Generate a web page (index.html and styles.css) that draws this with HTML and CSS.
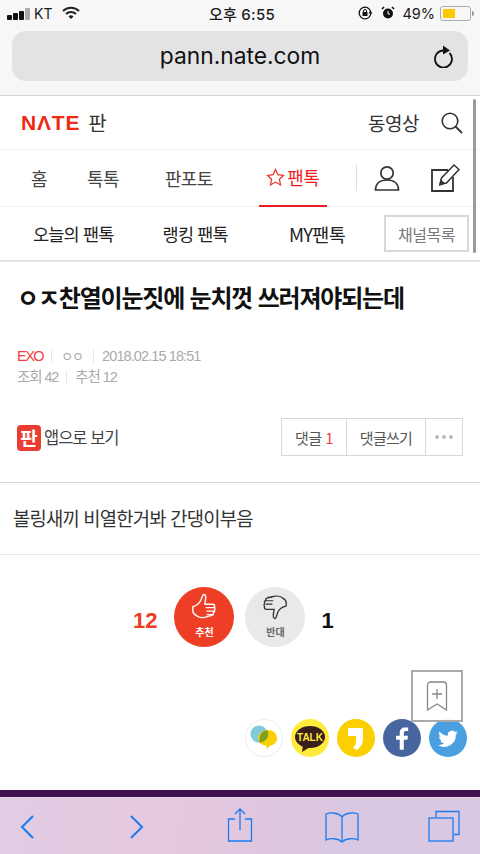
FILE: index.html
```html
<!DOCTYPE html>
<html lang="ko">
<head>
<meta charset="utf-8">
<title>pann.nate.com</title>
<link rel="stylesheet" href="styles.css">
</head>
<body>
<div class="screen">
  <div class="chrome">
    <div class="status">
      <div class="status-side status-left">
        <span class="signal"><i class="b1"></i><i class="b2"></i><i class="b3"></i><i class="b4"></i></span>
        <span class="carrier">KT</span>
        <svg class="wifi" width="18" height="14" viewBox="0 0 18 14"><path d="M1 5a11.500 11.500 0 0 1 16 0" fill="none" stroke="#222" stroke-width="2"/><path d="M4 8a7 7 0 0 1 10 0" fill="none" stroke="#222" stroke-width="2"/><path d="M6.500 10.500a3.500 3.500 0 0 1 5 0L9 13z" fill="#222"/></svg>
      </div>
      <div class="clock">오후 6:55</div>
      <div class="status-side status-right">
        <svg width="16" height="14" viewBox="0 0 16 14"><circle cx="8" cy="7" r="5.800" fill="none" stroke="#111" stroke-width="1.300"/><rect x="5.500" y="6" width="5" height="4" fill="#111"/><path d="M6.500 6V5a1.500 1.500 0 0 1 3 0v1" fill="none" stroke="#111"/><path d="M13 5l2.500 2.500h-4z" fill="#111"/></svg>
        <svg class="alarm" width="14" height="14" viewBox="0 0 14 14"><circle cx="7" cy="7.500" r="5" fill="#111"/><path d="M1 3l2-2M13 3l-2-2" stroke="#111" stroke-width="1.600"/><path d="M7 5v3h2" stroke="#fff" fill="none"/></svg>
        <span class="percent">49%</span>
        <span class="battery"><i class="level"></i></span><i class="nub"></i>
      </div>
    </div>
    <div class="urlbar">
      <span class="url">pann.nate.com</span>
      <svg class="reload" width="22" height="24" viewBox="0 0 22 24"><path d="M16.500 9a8.500 8.500 0 1 1-6-2.500" fill="none" stroke="#111" stroke-width="1.800"/><path d="M10 1.500l7 5-7 4z" fill="#111"/></svg>
    </div>
  </div>

  <main class="page">
    <header class="top">
      <div class="brand"><span class="logo">NΛTE</span><span class="pann">판</span></div>
      <div class="top-right">
        <span class="video">동영상</span>
        <svg width="24" height="24" viewBox="0 0 24 24"><circle cx="10" cy="10" r="7.800" fill="none" stroke="#333" stroke-width="1.600"/><path d="M15.500 15.500l6.500 6.500" stroke="#333" stroke-width="1.800"/></svg>
      </div>
    </header>

    <nav class="gnb">
      <a class="g g-home">홈</a>
      <a class="g g-talk">톡톡</a>
      <a class="g g-photo">판포토</a>
      <a class="g g-fan">
        <svg width="19" height="19" viewBox="0 0 19 19"><path d="M9.500 1.500l2.400 5.200 5.600.7-4.100 3.900 1.100 5.600-5-2.800-5 2.800 1.100-5.600L1.500 7.400l5.600-.7z" fill="none" stroke="#ee2a24" stroke-width="1.200"/></svg>
        <span>팬톡</span>
      </a>
      <span class="g-sep"></span>
      <svg class="g-user" width="26" height="28" viewBox="0 0 26 28"><circle cx="13" cy="9" r="6.200" fill="none" stroke="#333" stroke-width="1.700"/><path d="M1.500 26c0-6.500 4.500-10 11.500-10s11.500 3.500 11.500 10z" fill="none" stroke="#333" stroke-width="1.700"/></svg>
      <svg class="g-edit" width="30" height="30" viewBox="0 0 30 30"><path d="M18 7H2v21h21V14" fill="none" stroke="#333" stroke-width="1.800"/><path d="M10 21l1.500-6L24 2l5 4.500L16.500 20z" fill="none" stroke="#333" stroke-width="1.500"/><path d="M9 23l1.800-6.500 4.600 4.200z" fill="#333"/></svg>
    </nav>

    <nav class="lnb">
      <a class="l l-today">오늘의 팬톡</a>
      <a class="l l-rank">랭킹 팬톡</a>
      <a class="l l-my">MY팬톡</a>
      <a class="chan">채널목록</a>
    </nav>

    <h1 class="title">ㅇㅈ찬열이눈짓에 눈치껏 쓰러져야되는데</h1>

    <div class="meta">
      <div class="meta-row"><span class="exo">EXO</span><i class="vr"></i><span class="nick">ㅇㅇ</span><i class="vr"></i><span>2018.02.15 18:51</span></div>
      <div class="meta-row meta-stat"><span>조회 42</span><i class="vr"></i><span>추천 12</span></div>
    </div>

    <div class="actions">
      <a class="app">
        <span class="app-icon">판</span>
        <span>앱으로 보기</span>
      </a>
      <div class="btns">
        <a class="btn btn-a">댓글 <em>1</em></a>
        <a class="btn btn-b">댓글쓰기</a>
        <a class="btn btn-c"><i></i><i></i><i></i></a>
      </div>
    </div>

    <div class="body-text">볼링새끼 비열한거봐 간댕이부음</div>

    <div class="vote">
      <span class="count up">12</span>
      <div class="circle c-up">
        <svg width="32" height="36" viewBox="0 0 32 36"><path d="M3 16c3-1 7-3 9-7 1-2 2-5 3-7 2-1 3 1 3 3 0 3-1 6-1 8h9c2 0 3 2 2 3 1 1 1 3 0 4 1 1 0 3-1 3 0 2-1 3-2 3l-7 2c-4 1-9 0-11-2-2-1-4-3-4-5z" fill="none" stroke="#fff" stroke-width="1.600"/><path d="M18 17h10M19 21h9M19 25h7" stroke="#fff" stroke-width="1.400"/></svg>
        <span class="c-label">추천</span>
      </div>
      <div class="circle c-down">
        <svg width="32" height="36" viewBox="0 0 32 36"><path d="M29 15c-3 1-7 2-9 6-1 2-2 5-3 8-2 2-3-1-3-3 0-3 1-5 1-7H6c-2 0-3-2-2-3-1-1-1-3 0-4-1-1 0-3 1-3 0-2 1-3 2-3l7-2c4-1 9 0 11 2 2 1 4 3 4 5z" fill="none" stroke="#333" stroke-width="1.500"/><path d="M14 9H5M13 13H5M13 5H7" stroke="#333" stroke-width="1.400"/></svg>
        <span class="c-label">반대</span>
      </div>
      <span class="count down">1</span>
    </div>

    <div class="share">
      <span class="sh sh-band">
        <svg width="38" height="38" viewBox="0 0 38 38"><circle cx="14" cy="15" r="8.500" fill="#7fcbdc"/><path d="M23 11c5 0 9 3.500 9 8s-3 7-7 7.500l-3 3.500-1-3.500c-4 0-8-3-8-7.500s5-8 10-8z" fill="#fcd000"/><path d="M14.500 23.400a8.500 8.500 0 0 0 8-12c-5-.5-9 5-8 12z" fill="#7f9f20"/></svg>
      </span>
      <span class="sh sh-kakao">
        <svg width="38" height="38" viewBox="0 0 38 38"><ellipse cx="19" cy="18" rx="15" ry="11" fill="#3a1d1d"/><path d="M12 26l-1 7 8-5z" fill="#3a1d1d"/><text x="19" y="22" text-anchor="middle" class="talk">TALK</text></svg>
      </span>
      <span class="sh sh-story">
        <svg width="38" height="38" viewBox="0 0 38 38"><path d="M11 9h15v11c0 4-2 8-6 11l-4-2c2-2 3-4 3-7.500V17h-8z" fill="#fff"/></svg>
      </span>
      <span class="sh sh-fb">
        <svg width="38" height="38" viewBox="-2 -3 42 42"><path d="M21 31V20h4l.6-4.500H21v-3c0-1.400.4-2.200 2.300-2.200h2.500V6.500C25.400 6.400 24 6.300 22.400 6.300c-3.400 0-5.900 2.100-5.900 6v3.200h-4V20h4v11z" fill="#fff"/></svg>
      </span>
      <span class="sh sh-tw">
        <svg width="38" height="38" viewBox="-4 -5 46 46"><path d="M31 11.500c-.9.400-1.800.6-2.800.8 1-.6 1.800-1.600 2.200-2.700-1 .6-2 1-3.100 1.200a4.900 4.900 0 0 0-8.400 4.500c-4.100-.2-7.700-2.200-10.100-5.200-1.300 2.200-.7 5.100 1.500 6.600-.8 0-1.600-.2-2.200-.6 0 2.400 1.700 4.400 3.900 4.900-.7.200-1.500.2-2.200.1.600 2 2.400 3.400 4.600 3.400A9.900 9.900 0 0 1 7 26.500 14 14 0 0 0 28.500 14c1-.7 1.800-1.500 2.500-2.500z" fill="#fff"/></svg>
      </span>
    </div>

    <div class="dark-band"></div>
    <div class="scrollbar"></div>
    <div class="bookmark">
      <svg width="22" height="30" viewBox="0 0 22 30"><path d="M1.500 29V4a3 3 0 0 1 3-3h13a3 3 0 0 1 3 3v25L11 23z" fill="none" stroke="#888" stroke-width="1.300"/><path d="M11 8v10M6 13h10" stroke="#888" stroke-width="1.300"/></svg>
    </div>
  </main>

  <footer class="toolbar">
    <svg class="t-back" width="16" height="26" viewBox="0 0 16 26"><path d="M13 2L2 13l11 11" fill="none" stroke="#1a7cf0" stroke-width="2"/></svg>
    <svg class="t-fwd" width="16" height="26" viewBox="0 0 16 26"><path d="M3 2l11 11L3 24" fill="none" stroke="#1a7cf0" stroke-width="2"/></svg>
    <svg class="t-share" width="26" height="36" viewBox="0 0 26 36"><path d="M8 12H1.500v22h23V12H18" fill="none" stroke="#1a7cf0" stroke-width="1.300"/><path d="M13 23V2M8 7l5-5 5 5" fill="none" stroke="#1a7cf0" stroke-width="1.300"/></svg>
    <svg class="t-book" width="34" height="32" viewBox="0 0 34 32"><path d="M17 6C14 2 6 1 1 3v26c5-2 12-2 16 2 4-4 11-4 16-2V3c-5-2-13-1-16 3zM17 6v24" fill="none" stroke="#1a7cf0" stroke-width="1.300"/></svg>
    <svg class="t-tabs" width="32" height="32" viewBox="0 0 32 32"><path d="M8 7V1.500h23v23h-5" fill="none" stroke="#1a7cf0" stroke-width="1.300"/><rect x="1" y="8" width="24" height="23" fill="none" stroke="#1a7cf0" stroke-width="1.300"/></svg>
  </footer>
</div>
</body>
</html>
```
FILE: styles.css
```css
* { box-sizing: border-box; }
html, body { margin: 0; padding: 0; background: #fff; }
body { font-family: "Noto Sans CJK KR", "Liberation Sans", sans-serif; color: #222; }
i, em { font-style: normal; display: block; }
a { color: inherit; text-decoration: none; }
.screen { width: 480px; height: 854px; overflow: hidden; display: flex; flex-direction: column; }

.chrome { height: 96px; background: #f7f7f7; border-bottom: 1px solid #d5d5d5; padding: 0 12px; flex: none; }
.status { height: 31px; display: flex; align-items: center; justify-content: space-between; padding: 0 0 5px; position: relative; font-family: Inter, "Noto Sans CJK KR", sans-serif; font-size: 15px; color: #1c1c1c; }
.status-side { display: flex; align-items: center; }
.status-left { width: 165px; }
.status-right { justify-content: flex-end; padding-right: 3px; width: 170px; margin-right: -9px; }
.signal { display: flex; align-items: flex-end; gap: 1px; height: 13px; margin-left: -5px; }
.signal i { width: 5px; background: #111; border-radius: 1px; }
.signal .b1 { height: 5px; } .signal .b2 { height: 7px; } .signal .b3 { height: 9px; } .signal .b4 { height: 12px; background: #aaa; }
.carrier { margin-left: 4px; font-size: 14px; }
.wifi { margin-left: 10px; }
.clock { font-size: 15px; font-weight: 500; letter-spacing: 0.3px; }
.alarm { margin-left: 8px; }
.percent { margin-left: 7px; font-size: 14.500px; }
.battery { width: 31px; height: 15px; margin-left: 5px; border: 1px solid #aaa; border-radius: 3px; padding: 2px; display: block; }
.battery .level { width: 12px; height: 9px; background: #fdc800; }
.nub { width: 2px; height: 5px; background: #999; margin-left: 1px; border-radius: 0 2px 2px 0; }
.urlbar { height: 50px; background: #e3e3e6; border-radius: 14px; display: flex; align-items: center; justify-content: center; position: relative; }
.url { font-family: Inter, sans-serif; font-size: 22.800px; color: #111; padding-bottom: 2px; }
.reload { position: absolute; right: 13px; top: 13px; }

.page { flex: 1; position: relative; display: flex; flex-direction: column; overflow: hidden; }
.top { height: 54px; flex: none; display: flex; align-items: center; justify-content: space-between; padding: 0 16px 0 21px; border-bottom: 1px solid #f2f2f2; }
.brand { display: flex; align-items: center; }
.logo { font-family: "Liberation Sans", sans-serif; font-weight: 700; font-size: 21px; letter-spacing: 0.8px; color: #ef2a12; }
.pann { margin-left: 8px; font-size: 20px; color: #333; }
.top-right { display: flex; align-items: center; }
.video { font-size: 19px; color: #333; letter-spacing: -0.500px; margin-right: 21px; }

.gnb { height: 57px; flex: none; display: flex; align-items: center; border-bottom: 1px solid #f2f2f2; position: relative; font-size: 18px; letter-spacing: -0.600px; color: #444; }
.g { display: block; }
.g-home { margin-left: 31px; }
.g-talk { margin-left: 40px; }
.g-photo { margin-left: 46px; }
.g-fan { width: 68px; height: 57px; margin-left: 46px; margin-right: 29px; display: flex; align-items: center; justify-content: center; gap: 2px; color: #ee1c25; border-bottom: 2px solid #ee1c25; flex: none; }
.g-sep { width: 1px; height: 26px; background: #ddd; }
.g-user { margin-left: 17px; }
.g-edit { margin-left: 30px; margin-top: 0; }

.lnb { height: 55px; flex: none; display: flex; align-items: center; border-bottom: 2px solid #e4e4e4; font-size: 17.500px; letter-spacing: -0.800px; color: #222; }
.l-today { margin-left: 33px; }
.l-rank { margin-left: 49px; }
.l-my { margin-left: 61px; font-size: 18.500px; letter-spacing: -0.700px; }
.chan { margin-left: 39px; width: 85px; height: 37px; border: 2px solid #d8d8d8; display: flex; align-items: center; justify-content: center; font-size: 16px; letter-spacing: -0.500px; color: #777; }

.title { margin: 18px 0 0 17px; font-size: 24px; line-height: 34px; font-weight: 700; letter-spacing: -1.200px; color: #111; white-space: nowrap; }

.meta { margin: 32px 0 0 17px; font-family: "Liberation Sans", "Noto Sans CJK KR", sans-serif; font-size: 14.500px; letter-spacing: -0.900px; color: #aaa; line-height: 21px; }
.meta-row { display: flex; align-items: center; }
.meta-stat { letter-spacing: -1.100px; }
.exo { color: #ef3e3e; letter-spacing: -1.500px; }
.nick { font-size: 13px; letter-spacing: -1px; margin: 0 2px 0 1px; }
.vr { width: 1px; height: 13px; background: #e5e5e5; margin: 0 8px; }

.actions { margin-top: 30px; height: 38px; display: flex; align-items: center; justify-content: space-between; padding: 0 17px; flex: none; }
.app { display: flex; align-items: center; gap: 3px; font-size: 16.500px; letter-spacing: -1px; color: #444; }
.app-icon { width: 24px; height: 26px; border-radius: 4px; background: #ea3c30; color: #fff; display: flex; align-items: center; justify-content: center; font-size: 19px; font-weight: 700; letter-spacing: 0; margin-top: 1px; }
.btns { display: flex; height: 38px; border: 1px solid #d8d8d8; font-size: 15px; letter-spacing: -0.700px; color: #555; }
.btn { display: flex; align-items: center; justify-content: center; gap: 4px; border-right: 1px solid #d8d8d8; }
.btn em { color: #ef3e3e; }
.btn-a { width: 65px; }
.btn-b { width: 79px; }
.btn-c { width: 36px; border-right: 0; gap: 3px; }
.btn-c i { width: 4px; height: 4px; border-radius: 50%; background: #bbb; }

.body-text { margin-top: 26px; height: 73px; border-top: 1px solid #d8d8d8; border-bottom: 1px solid #e8e8e8; padding: 0 0 2px 13px; display: flex; align-items: center; font-size: 18.800px; letter-spacing: -0.800px; color: #333; flex: none; }

.vote { margin-top: 32px; height: 60px; display: flex; align-items: center; flex: none; position: relative; }
.count { font-family: "Liberation Sans", sans-serif; font-weight: 700; font-size: 22px; margin-top: 8px; }
.count.up { color: #ee3b24; margin-left: 133px; }
.count.down { color: #111; margin-left: 16px; }
.circle { width: 60px; height: 60px; border-radius: 50%; display: flex; flex-direction: column; align-items: center; }
.circle svg { margin-top: 6px; height: 31px; }
.c-up { background: #ee3f26; margin-left: 17px; }
.c-down { background: #e9e9e9; margin-left: 11px; }
.c-label { font-size: 10px; font-weight: 700; line-height: 14px; margin-top: 1px; }
.c-up .c-label { color: #fff; }
.c-down .c-label { color: #666; }

.share { margin-top: 72px; display: flex; justify-content: flex-end; gap: 8px; padding-right: 13px; flex: none; }
.sh { width: 38px; height: 38px; border-radius: 50%; display: block; }
.sh svg { display: block; }
.sh-band { background: #fff; border: 1px solid #eee; }
.sh-band svg { margin: -1px; }
.sh-kakao { background: #ffeb3b; }
.sh-story { background: #fcd000; }
.sh-fb { background: #47669f; }
.sh-tw { background: #4a9fe0; }
.talk { font-family: "Liberation Sans", sans-serif; font-size: 10px; font-weight: 700; fill: #ffe93b; }

.dark-band { height: 8px; margin-top: 33px; background: #40104f; flex: none; }
.scrollbar { position: absolute; left: 473px; top: 3px; width: 3px; height: 154px; background: #9a9a9a; border-radius: 2px; }
.bookmark { position: absolute; left: 411px; top: 574px; width: 52px; height: 52px; border: 2px solid #aaa; background: rgba(255,255,255,.9); display: flex; align-items: center; justify-content: center; }

.toolbar { height: 57px; flex: none; background: linear-gradient(100deg, #e0cde4 0%, #e6c8df 35%, #d9c6e0 70%, #dac8e2 100%); border-top: 1px solid #e3d6ea; display: flex; align-items: center; padding-left: 20px; }
.toolbar svg { flex: none; }
.t-back { margin-top: 2px; }
.t-fwd { margin-left: 92px; margin-top: 2px; }
.t-share { margin-left: 83px; margin-top: -2px; }
.t-book { margin-left: 72px; margin-top: 2px; }
.t-tabs { margin-left: 69px; }
```
